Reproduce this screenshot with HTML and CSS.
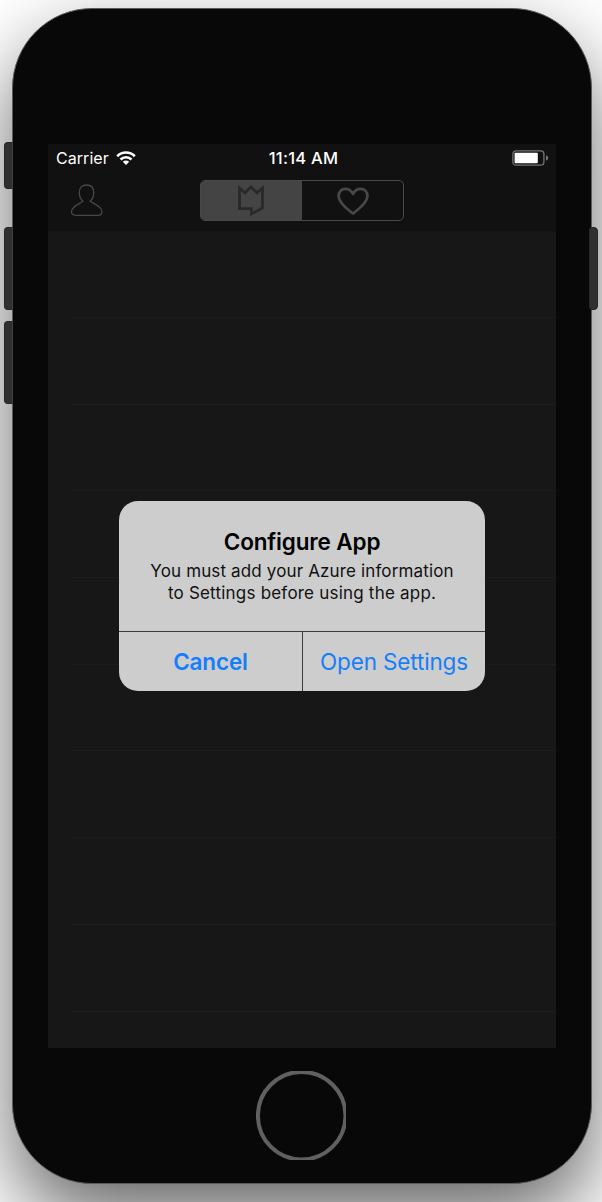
FILE: index.html
```html
<!DOCTYPE html>
<html lang="en">
<head>
<meta charset="utf-8">
<title>Configure App</title>
<link rel="stylesheet" href="styles.css">
</head>
<body>
<main class="phone">
  <span class="side-key mute"></span>
  <span class="side-key volume-up"></span>
  <span class="side-key volume-down"></span>
  <span class="side-key power"></span>
  <section class="screen">
    <header class="top-bar">
      <div class="status-bar">
        <div class="carrier"><span class="carrier-name">Carrier</span>
          <svg class="wifi" viewBox="0 0 20 14" width="20" height="14" fill="none" stroke="#fff" stroke-width="2.6"><path d="M1.2 5.2C6.2.3 13.8.3 18.8 5.2M4.5 8.5C7.6 5.5 12.4 5.5 15.5 8.5"/><path d="M6.8 10.8C8.6 9 11.4 9 13.2 10.8L10 14Z" fill="#fff" stroke="none"/></svg>
        </div>
        <time class="clock">11:14 AM</time>
        <svg class="battery" viewBox="0 0 37 16" width="37" height="16"><rect x=".9" y=".8" width="31" height="14.4" rx="3.2" fill="none" stroke="#757575" stroke-width="1.3"/><rect x="2.6" y="2.8" width="23.2" height="10.4" rx=".8" fill="#fff"/><path d="M34 5.2Q36.2 6 36.2 8T34 10.8Z" fill="#757575"/></svg>
      </div>
      <nav class="nav-bar">
        <svg class="person" viewBox="0 0 34 34" width="34" height="34" fill="none" stroke="#484848" stroke-width="1.3" stroke-linejoin="round"><path d="M13 18.200C10.500 16 9.300 13.500 9.300 9.800C9.300 4.500 12 2 16.600 2C21.200 2 23.700 4.500 23.700 9.800C23.700 13.500 22.700 16 20.200 18.200C23.500 20.600 32 23.700 32 28.500C32 31 30.500 32.300 28 32.300H5.500C3 32.300 1.500 31 1.500 28.500C1.500 23.700 9.700 20.600 13 18.200Z"/></svg>
        <div class="segments">
          <span class="segment selected"><svg viewBox="0 0 28 32" width="28" height="32" fill="none" stroke="#292929" stroke-width="2.700"><path d="M1.500 3L7 7.800L13 2L19 7.800L24.500 3V23L13.400 29V23.700H1.500Z"/></svg></span>
          <span class="segment"><svg viewBox="0 0 34 30" width="34" height="30" fill="none" stroke="#484848" stroke-width="2.700" stroke-linejoin="round"><path d="M17 27.500C12.500 24 2.600 17.500 2.600 10C2.600 5.500 5.700 2.800 9.400 2.800C13 2.800 15.500 5 17 8C18.500 5 21 2.800 24.600 2.800C28.300 2.800 31.400 5.500 31.400 10C31.400 17.500 21.500 24 17 27.500Z"/></svg></span>
        </div>
      </nav>
    </header>
    <div class="list">
      <div class="row"></div><div class="row"></div><div class="row"></div>
      <div class="row"></div><div class="row"></div><div class="row"></div>
      <div class="row"></div><div class="row"></div><div class="row"></div>
    </div>
    <div class="alert" role="alertdialog">
      <div class="alert-body">
        <h1 class="alert-title">Configure App</h1>
        <p class="alert-text"><span class="line-one">You must add your Azure information</span><br><span class="line-two">to Settings before using the app.</span></p>
      </div>
      <div class="alert-actions">
        <button class="action cancel">Cancel</button>
        <button class="action">Open Settings</button>
      </div>
    </div>
  </section>
  <svg class="home" viewBox="0 0 90 89" width="90" height="89"><circle cx="45.700" cy="44.700" r="43.800" fill="none" stroke="#606060" stroke-width="4"/></svg>
</main>
</body>
</html>
```
FILE: styles.css
```css
* { box-sizing: border-box; }
body {
  margin: 0;
  height: 1202px;
  overflow: hidden;
  padding: 8px 10px 0 12px;
  background: #fff;
  font-family: Inter, "Liberation Sans", sans-serif;
}
.phone {
  position: relative;
  width: 580px;
  height: 1176px;
  padding: 135px 35px 0;
  border: 1px solid #5b5b5b;
  border-radius: 80px;
  background: #080808;
  box-shadow: 0 35px 80px rgba(0, 0, 0, .6);
}
.side-key {
  position: absolute;
  left: -9px;
  width: 9px;
  height: 83px;
  border: 1px solid #272727;
  border-right-color: #414141;
  border-radius: 4px 0 0 4px;
  background: #303030;
}
.mute { top: 133px; height: 47px; }
.volume-up { top: 218px; }
.volume-down { top: 312px; }
.power {
  left: auto;
  right: -7px;
  top: 218px;
  border-color: #272727;
  border-radius: 3px 4px 4px 3px;
}
.screen {
  position: relative;
  width: 508px;
  height: 904px;
  background: #171717;
  overflow: hidden;
}
.top-bar { height: 88px; background: #111; border-bottom: 1px solid #151515; }
.status-bar {
  display: grid;
  grid-template-columns: 1fr auto 1fr;
  align-items: center;
  height: 28px;
  padding: 0 7px 0 8px;
  color: #fff;
  font-size: 16px;
}
.carrier { display: flex; align-items: center; gap: 7px; }
.carrier-name { letter-spacing: .05px; }
.clock { font-weight: 500; font-size: 16.5px; letter-spacing: .25px; padding-left: 2px; }
.battery { justify-self: end; }
.nav-bar { display: flex; padding: 8px 0 0 22px; }
.person { margin-top: 3px; }
.segments {
  display: flex;
  width: 204px;
  height: 41px;
  margin-left: 96px;
  border: 1px solid #484848;
  border-radius: 5px;
  overflow: hidden;
}
.segment { display: flex; flex: 1; align-items: center; justify-content: center; }
.selected { background: #444; }
.list { padding-left: 23px; }
.row { height: 86.7px; border-bottom: 1px solid #1c1c1c; }
.row:first-child { height: 86px; }
.alert {
  position: absolute;
  left: 71px;
  top: 357px;
  width: 366px;
  height: 190px;
  border-radius: 19px;
  overflow: hidden;
  background: #cdcdcd;
  text-align: center;
  white-space: nowrap;
}
.alert-body { height: 130px; padding-top: 27px; }
.alert-title { margin: 0; font-size: 22.5px; line-height: 28px; font-weight: 600; letter-spacing: -.15px; }
.alert-text { margin: 4px 0 0; font-size: 17px; line-height: 22px; color: #111; }
.line-one { letter-spacing: .14px; }
.line-two { letter-spacing: .21px; }
.alert-actions { display: grid; grid-template-columns: 184px 182px; height: 60px; border-top: 1px solid #3c3c3c; }
.action {
  padding: 0 0 1px;
  border: 0;
  background: none;
  color: #147efb;
  font: 22.5px Inter, "Liberation Sans", sans-serif;
  letter-spacing: -.15px;
}
.cancel { border-right: 1px solid #3c3c3c; font-weight: 600; }
.home { display: block; margin: 23px 0 0 208px; overflow: hidden; }
```
